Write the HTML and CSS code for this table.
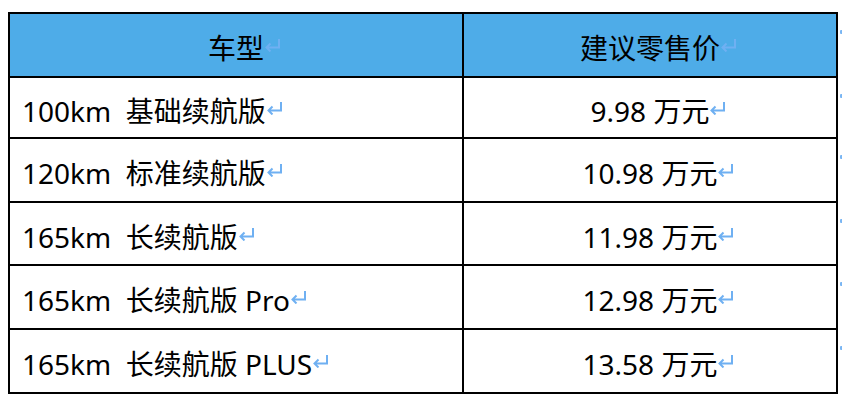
FILE: index.html
```html
<!DOCTYPE html>
<html lang="zh-CN">
<head>
<meta charset="utf-8">
<title>车型价格</title>
<link rel="stylesheet" href="styles.css">
</head>
<body>
<div class="table">
  <div class="row head h62">
    <div class="cell c1"><span class="t">车型<span class="pm"><svg width="17" height="14" viewBox="0 0 17 14"><path d="M15 1V9.5H2.5M6.5 5.5L2.5 9.5L6.5 13.5" fill="none" stroke="#6fb0f2" stroke-width="2"/></svg></span></span></div>
    <div class="cell c2"><span class="t">建议零售价<span class="pm"><svg width="17" height="14" viewBox="0 0 17 14"><path d="M15 1V9.5H2.5M6.5 5.5L2.5 9.5L6.5 13.5" fill="none" stroke="#6fb0f2" stroke-width="2"/></svg></span></span></div>
  </div>
  <div class="row h59">
    <div class="cell c1 left"><span class="t">100km&nbsp; 基础续航版<span class="pm"><svg width="17" height="14" viewBox="0 0 17 14"><path d="M15 1V9.5H2.5M6.5 5.5L2.5 9.5L6.5 13.5" fill="none" stroke="#6fb0f2" stroke-width="2"/></svg></span></span></div>
    <div class="cell c2"><span class="t">9.98 万元<span class="pm"><svg width="17" height="14" viewBox="0 0 17 14"><path d="M15 1V9.5H2.5M6.5 5.5L2.5 9.5L6.5 13.5" fill="none" stroke="#6fb0f2" stroke-width="2"/></svg></span></span></div>
  </div>
  <div class="row h62">
    <div class="cell c1 left"><span class="t">120km&nbsp; 标准续航版<span class="pm"><svg width="17" height="14" viewBox="0 0 17 14"><path d="M15 1V9.5H2.5M6.5 5.5L2.5 9.5L6.5 13.5" fill="none" stroke="#6fb0f2" stroke-width="2"/></svg></span></span></div>
    <div class="cell c2"><span class="t">10.98 万元<span class="pm"><svg width="17" height="14" viewBox="0 0 17 14"><path d="M15 1V9.5H2.5M6.5 5.5L2.5 9.5L6.5 13.5" fill="none" stroke="#6fb0f2" stroke-width="2"/></svg></span></span></div>
  </div>
  <div class="row h61">
    <div class="cell c1 left"><span class="t">165km&nbsp; 长续航版<span class="pm"><svg width="17" height="14" viewBox="0 0 17 14"><path d="M15 1V9.5H2.5M6.5 5.5L2.5 9.5L6.5 13.5" fill="none" stroke="#6fb0f2" stroke-width="2"/></svg></span></span></div>
    <div class="cell c2"><span class="t">11.98 万元<span class="pm"><svg width="17" height="14" viewBox="0 0 17 14"><path d="M15 1V9.5H2.5M6.5 5.5L2.5 9.5L6.5 13.5" fill="none" stroke="#6fb0f2" stroke-width="2"/></svg></span></span></div>
  </div>
  <div class="row h62">
    <div class="cell c1 left"><span class="t">165km&nbsp; 长续航版 Pro<span class="pm"><svg width="17" height="14" viewBox="0 0 17 14"><path d="M15 1V9.5H2.5M6.5 5.5L2.5 9.5L6.5 13.5" fill="none" stroke="#6fb0f2" stroke-width="2"/></svg></span></span></div>
    <div class="cell c2"><span class="t">12.98 万元<span class="pm"><svg width="17" height="14" viewBox="0 0 17 14"><path d="M15 1V9.5H2.5M6.5 5.5L2.5 9.5L6.5 13.5" fill="none" stroke="#6fb0f2" stroke-width="2"/></svg></span></span></div>
  </div>
  <div class="row h62">
    <div class="cell c1 left"><span class="t">165km&nbsp; 长续航版 PLUS<span class="pm"><svg width="17" height="14" viewBox="0 0 17 14"><path d="M15 1V9.5H2.5M6.5 5.5L2.5 9.5L6.5 13.5" fill="none" stroke="#6fb0f2" stroke-width="2"/></svg></span></span></div>
    <div class="cell c2"><span class="t">13.58 万元<span class="pm"><svg width="17" height="14" viewBox="0 0 17 14"><path d="M15 1V9.5H2.5M6.5 5.5L2.5 9.5L6.5 13.5" fill="none" stroke="#6fb0f2" stroke-width="2"/></svg></span></span></div>
  </div>
</div>
</body>
</html>
```
FILE: styles.css
```css
html, body {
  margin: 0;
  padding: 0;
  background: #fff;
}
body {
  padding: 12px 0 0 8px;
  font-family: "Noto Sans", "Noto Sans CJK SC", sans-serif;
  font-size: 28px;
  color: #000;
}
.table {
  width: 830px;
  border-top: 2px solid #000;
  border-left: 2px solid #000;
  box-sizing: border-box;
}
.row {
  display: flex;
  position: relative;
}
.row::after {
  content: "";
  position: absolute;
  right: -5px;
  top: 16px;
  width: 3px;
  height: 4px;
  background: #7ab6f3;
  border-radius: 1px;
}
.h62 { height: 64px; }
.h59 { height: 61px; }
.h61 { height: 63px; }
.cell {
  border-right: 2px solid #000;
  border-bottom: 2px solid #000;
  box-sizing: border-box;
  display: flex;
  align-items: center;
  justify-content: center;
  padding-top: 6px;
  white-space: pre;
  line-height: 1;
}
.c1 { width: 454px; }
.c2 { width: 374px; }
.head .cell { background: #4eace8; }
.cell.left {
  justify-content: flex-start;
  padding-left: 12px;
}
.t {
  display: inline-flex;
  align-items: center;
}
.pm {
  display: inline-block;
  width: 0;
  height: 14px;
  position: relative;
  top: -3px;
}
.pm svg {
  display: block;
}
```
